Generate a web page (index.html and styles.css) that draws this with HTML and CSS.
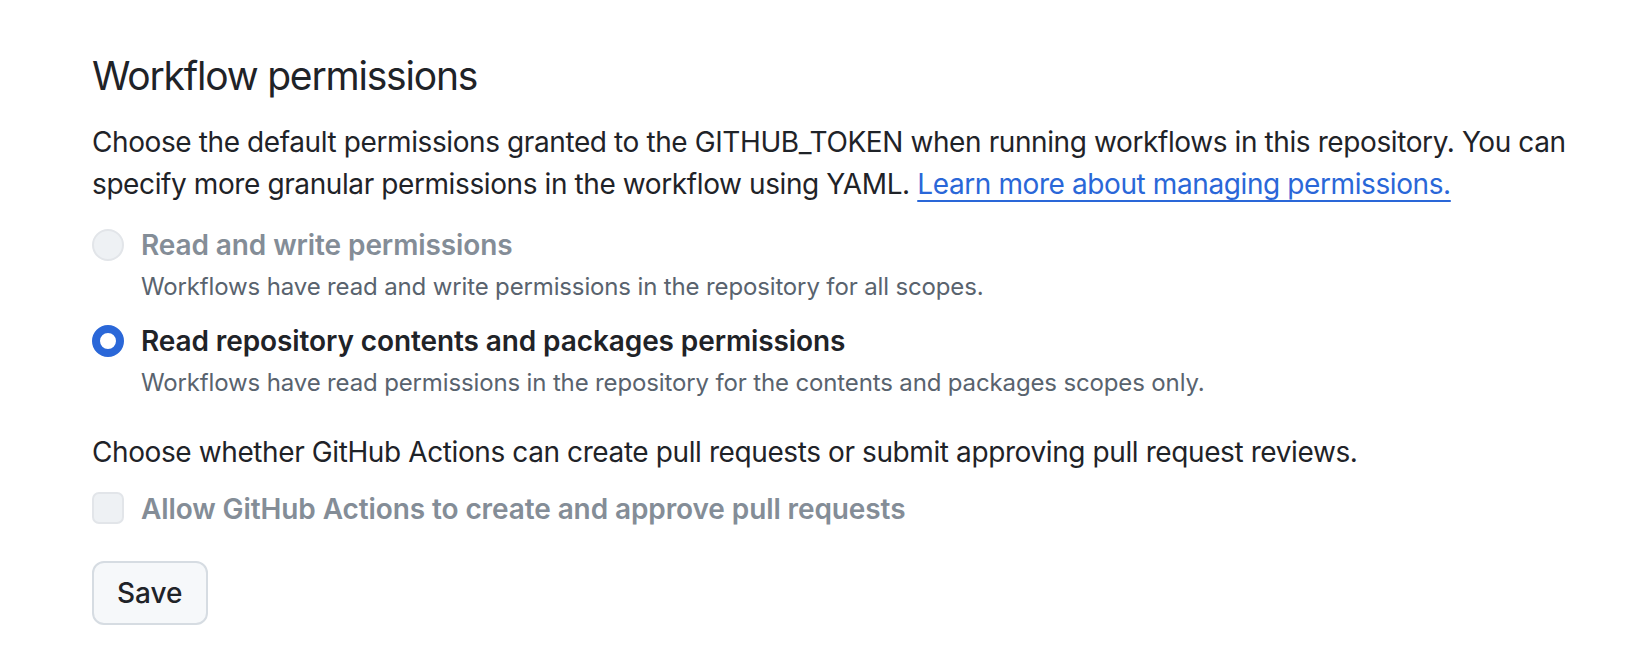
FILE: index.html
```html
<!DOCTYPE html>
<html lang="en">
<head>
    <meta charset="UTF-8">
    <meta name="viewport" content="width=device-width, initial-scale=1.0">
    <title>Workflow permissions</title>
    <link rel="stylesheet" href="styles.css">
</head>
<body>
    <div class="settings">
        <h2 class="heading">Workflow permissions</h2>
        <p class="intro">Choose the default permissions granted to the GITHUB_TOKEN when running workflows in this repository. You can specify more granular permissions in the workflow using YAML. <a href="#">Learn more about managing permissions.</a></p>

        <div class="option option-first">
            <span class="radio radio-disabled"></span>
            <div class="option-text">
                <div class="label label-disabled">Read and write permissions</div>
                <div class="note">Workflows have read and write permissions in the repository for all scopes.</div>
            </div>
        </div>

        <div class="option">
            <span class="radio radio-checked"></span>
            <div class="option-text">
                <div class="label">Read repository contents and packages permissions</div>
                <div class="note">Workflows have read permissions in the repository for the contents and packages scopes only.</div>
            </div>
        </div>

        <p class="question">Choose whether GitHub Actions can create pull requests or submit approving pull request reviews.</p>

        <div class="option check-row">
            <span class="checkbox"></span>
            <div class="label label-disabled">Allow GitHub Actions to create and approve pull requests</div>
        </div>

        <button class="btn" type="button">Save</button>
    </div>
</body>
</html>
```

FILE: styles.css
```css
body {
    margin: 0;
    background: #ffffff;
    color: #1f2328;
    font-family: Inter, 'Liberation Sans', sans-serif;
}
.settings {
    padding: 51px 40px 40px 92px;
    max-width: 1500px;
}
.heading {
    font-size: 39px;
    line-height: 50px;
    font-weight: 400;
    letter-spacing: -1.2px;
    margin: 0 0 20px;
}
.intro,
.question {
    font-size: 28px;
    line-height: 42px;
    letter-spacing: -0.4px;
    margin: 0;
}
.intro a {
    color: #2a67d8;
    text-decoration: underline;
    text-underline-offset: 6px;
    text-decoration-thickness: 2px;
}
.option {
    display: flex;
    gap: 17px;
    margin-top: 15px;
}
.option-first {
    margin-top: 19px;
}
.radio {
    flex: none;
    width: 32px;
    height: 32px;
    margin-top: 5px;
    border-radius: 50%;
    box-sizing: border-box;
}
.radio-disabled {
    background: #eef1f4;
    border: 2px solid #e2e5e9;
}
.radio-checked {
    background: #ffffff;
    border: 8px solid #2a67d8;
}
.label {
    font-size: 28px;
    line-height: 42px;
    font-weight: 600;
    letter-spacing: -0.1px;
}
.label-disabled {
    color: #848d97;
}
.note {
    font-size: 24px;
    line-height: 36px;
    letter-spacing: -0.14px;
    color: #59636e;
    margin-top: 3px;
}
.question {
    margin-top: 30px;
}
.check-row {
    margin-top: 15px;
}
.checkbox {
    flex: none;
    width: 32px;
    height: 32px;
    margin-top: 4px;
    box-sizing: border-box;
    border-radius: 7px;
    background: #eef1f4;
    border: 2px solid #e2e5e9;
}
.btn {
    display: block;
    margin-top: 31px;
    height: 64px;
    padding: 0 23px;
    font-family: inherit;
    font-size: 28px;
    font-weight: 500;
    color: #1f2328;
    background: #f6f8fa;
    border: 2px solid #d6dce2;
    border-radius: 12px;
}
```
